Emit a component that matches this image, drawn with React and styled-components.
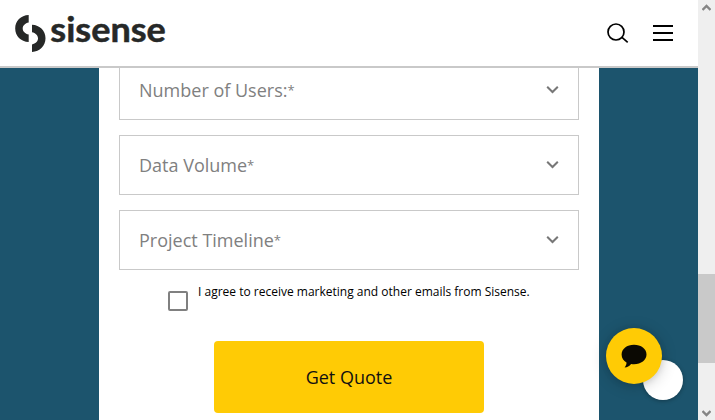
import React from "react";
import styled, { createGlobalStyle } from "styled-components";

const GlobalStyle = createGlobalStyle`
  * { box-sizing: border-box; }
  body { margin: 0; overflow: hidden; font-family: "Open Sans", sans-serif; }
`;

const Window = styled.div`
  display: flex;
  width: 715px;
  height: 420px;
  overflow: hidden;
`;

const Page = styled.div`
  position: relative;
  display: flex;
  flex-direction: column;
  width: 698px;
  height: 420px;
  background: #1c546d;
`;

const Header = styled.header`
  display: flex;
  align-items: center;
  justify-content: space-between;
  flex: none;
  height: 68px;
  padding: 0 25px 0 15px;
  background: #fff;
  border-bottom: 2px solid #c9c9c9;
`;

const Logo = styled.svg`
  display: block;
  width: 160px;
  height: 56px;
  overflow: visible;
`;

const LogoText = styled.text`
  font: 700 34px Lato, sans-serif;
  fill: #262827;
  stroke: #262827;
  stroke-width: 0.5px;
`;

const Actions = styled.div`
  display: flex;
  align-items: center;
  gap: 24px;
`;

const Icon = styled.svg`
  display: block;
  flex: none;
  width: ${(p) => p.$w}px;
  height: ${(p) => p.$h}px;
  fill: none;
  stroke: ${(p) => p.$color || "#000"};
  stroke-width: ${(p) => p.$stroke || 2};
`;

const Viewport = styled.main`
  flex: 1;
  min-height: 0;
  overflow: hidden;
`;

const Form = styled.form`
  display: flex;
  flex-direction: column;
  gap: 15px;
  width: 500px;
  height: 360px;
  margin: -8px 0 0 99px;
  padding: 0 20px;
  background: #fff;
`;

const Field = styled.div`
  display: flex;
  align-items: center;
  justify-content: space-between;
  flex: none;
  height: 60px;
  padding: 0 19px;
  border: 1px solid #c9c9c9;
  color: #808080;
  font-size: 18px;
  line-height: 24px;
`;

const Star = styled.span`
  font-size: 13px;
  line-height: 1;
  vertical-align: 2px;
`;

const Consent = styled.label`
  display: flex;
  flex: none;
  gap: 10px;
  height: 41px;
  padding-left: 49px;
  color: #000;
  font-size: 12px;
  line-height: 14px;
`;

const Box = styled.span`
  width: 20px;
  height: 20px;
  margin-top: 6px;
  border: 2px solid #808080;
  border-radius: 2px;
`;

const Submit = styled.button`
  align-self: center;
  flex: none;
  width: 270px;
  height: 72px;
  padding: 0;
  border: 0;
  border-radius: 4px;
  background: #ffcb05;
  color: #111;
  font: 18px/24px "Open Sans", sans-serif;
`;

const Bubble = styled.div`
  position: absolute;
  left: ${(p) => p.$x}px;
  top: ${(p) => p.$y}px;
  display: flex;
  align-items: center;
  justify-content: center;
  width: ${(p) => p.$size}px;
  height: ${(p) => p.$size}px;
  border-radius: 50%;
  background: ${(p) => p.$color};
  box-shadow: ${(p) => p.$shadow};
`;

const Scrollbar = styled.div`
  display: flex;
  flex-direction: column;
  align-items: center;
  justify-content: space-between;
  width: 17px;
  height: 420px;
  padding: 4px 0 3px;
  background: #efefef;
`;

const Thumb = styled.div`
  width: 17px;
  height: 89px;
  margin-top: 215px;
`;

const ThumbFill = styled.div`
  height: 100%;
  background: #c9c9c9;
`;

function Chevron() {
  return (
    <Icon $w={13} $h={9} $color="#777" $stroke={2} viewBox="0 0 13 9">
      <path d="M1.2 .8 L6.5 6 L11.8 .8" />
    </Icon>
  );
}

function SelectField({ label }) {
  return (
    <Field>
      <span>{label}<Star>*</Star></span>
      <Chevron />
    </Field>
  );
}

export default function App() {
  return (
    <Window>
      <GlobalStyle />
      <Page>
        <Header>
          <Logo viewBox="15 5 160 56">
            <path fill="#262827" d="M28.7 15 V22.4 C25.2 23.2 22.7 25.3 22.7 28.4 C22.7 31.5 25.2 33.6 28.7 34.4 V42 C20.8 41.8 15.2 36 15.2 28.5 C15.2 21 20.8 15.2 28.7 15 Z M32 24.7 C39.9 24.9 45.5 30.7 45.5 38.3 C45.5 45.9 39.9 51.7 32 52 V44.4 C35.5 43.6 38 41.5 38 38.3 C38 35.1 35.5 33 32 32.2 Z" />
            <LogoText x="50.3" y="42" textLength="115.5" lengthAdjust="spacingAndGlyphs">sisense</LogoText>
          </Logo>
          <Actions>
            <Icon $w={22} $h={20} $stroke={1.7} viewBox="0 0 22 20">
              <circle cx="9" cy="9" r="8" />
              <path d="M14.7 14.2 L20.7 19.3" />
            </Icon>
            <Icon $w={20} $h={16} viewBox="0 0 20 16">
              <path d="M0 1H20M0 8H20M0 15H20" />
            </Icon>
          </Actions>
        </Header>
        <Viewport>
          <Form>
            <SelectField label="Number of Users:" />
            <SelectField label="Data Volume" />
            <SelectField label="Project Timeline" />
            <Consent>
              <Box />
              I agree to receive marketing and other emails from Sisense.
            </Consent>
            <Submit type="button">Get Quote</Submit>
          </Form>
        </Viewport>
        <Bubble $x={643} $y={360} $size={40} $color="#fff" $shadow="0 1px 4px rgba(0,0,0,.3)" />
        <Bubble $x={606} $y={328} $size={56} $color="#ffcb05" $shadow="0 1px 6px rgba(0,0,0,.1), 0 2px 16px rgba(0,0,0,.2)">
          <Icon $w={26} $h={24} viewBox="0 0 26 24" $color="none">
            <path fill="#0b0903" d="M13 .8 C20 .8 25.5 5 25.5 10.5 C25.5 16 20 20.2 13 20.2 C12 20.2 11 20.1 10.1 19.9 C8.4 22.3 6.2 23.3 3.6 23.4 C4.9 22 5.6 20.3 5.5 18.5 C2.5 16.8 .6 14 .6 10.5 C.6 5 6 .8 13 .8 Z" />
          </Icon>
        </Bubble>
      </Page>
      <Scrollbar>
        <Icon $w={9} $h={8} viewBox="0 0 9 8" $color="#858585" $stroke={2.4}>
          <path d="M.5 6 L4.5 2 L8.5 6" />
        </Icon>
        <Thumb><ThumbFill /></Thumb>
        <Icon $w={9} $h={8} viewBox="0 0 9 8" $color="#858585" $stroke={2.4}>
          <path d="M.5 2 L4.5 6 L8.5 2" />
        </Icon>
      </Scrollbar>
    </Window>
  );
}
